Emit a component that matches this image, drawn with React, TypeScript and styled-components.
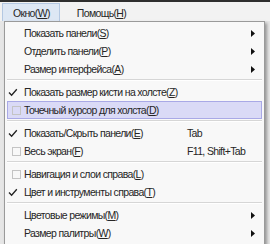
import React from "react";
import styled, { createGlobalStyle } from "styled-components";

const GlobalStyle = createGlobalStyle`
    html, body {
        margin: 0;
        padding: 0;
        width: 270px;
        height: 244px;
        overflow: hidden;
        background: #e6e6e6;
        font-family: "Liberation Sans", Arial, sans-serif;
        font-size: 10.5px;
        letter-spacing: -0.65px;
        color: #262626;
    }
`;

type Item =
    | { sep: true }
    | {
          sep?: false;
          label: string;
          key: string;
          check?: "on" | "off";
          shortcut?: string;
          sub?: boolean;
          active?: boolean;
      };

const items: Item[] = [
    { label: "Показать панели", key: "S", sub: true },
    { label: "Отделить панели", key: "P", sub: true },
    { label: "Размер интерфейса", key: "A", sub: true },
    { sep: true },
    { label: "Показать размер кисти на холсте", key: "Z", check: "on" },
    { label: "Точечный курсор для холста", key: "D", check: "off", active: true },
    { sep: true },
    { label: "Показать/Скрыть панели", key: "E", check: "on", shortcut: "Tab" },
    { label: "Весь экран", key: "F", check: "off", shortcut: "F11, Shift+Tab" },
    { sep: true },
    { label: "Навигация и слои справа", key: "L", check: "off" },
    { label: "Цвет и инструменты справа", key: "T", check: "on" },
    { sep: true },
    { label: "Цветовые режимы", key: "M", sub: true },
    { label: "Размер палитры", key: "W", sub: true },
];

const Mnemonic = ({ label, k }: { label: string; k: string }) => (
    <>
        {label}(<u>{k}</u>)
    </>
);

const App = () => {
    return (
        <>
            <GlobalStyle />
            <Screen>
                <TopStrip />
                <MenuBar>
                    <BarItem $open>
                        <Mnemonic label="Окно" k="W" />
                    </BarItem>
                    <BarItem>
                        <Mnemonic label="Помощь" k="H" />
                    </BarItem>
                </MenuBar>
                <Workspace>
                    <Dropdown>
                        {items.map((it, i) =>
                            it.sep ? (
                                <Separator key={i} />
                            ) : (
                                <Row key={i} $active={it.active}>
                                    <CheckCell>
                                        {it.check === "on" && (
                                            <svg width="10" height="9" viewBox="0 0 10 9">
                                                <path
                                                    d="M1 4.5 L3.6 7.2 L8.8 1.2"
                                                    fill="none"
                                                    stroke="#222"
                                                    strokeWidth="1.3"
                                                />
                                            </svg>
                                        )}
                                        {it.check === "off" && <Box />}
                                    </CheckCell>
                                    <Label>
                                        <Mnemonic label={it.label} k={it.key} />
                                    </Label>
                                    <Shortcut>{it.shortcut}</Shortcut>
                                    <ArrowCell>
                                        {it.sub && (
                                            <svg width="4" height="7" viewBox="0 0 4 7">
                                                <path d="M0 0 L4 3.5 L0 7 Z" fill="#111" />
                                            </svg>
                                        )}
                                    </ArrowCell>
                                </Row>
                            )
                        )}
                    </Dropdown>
                </Workspace>
            </Screen>
        </>
    );
};

const Screen = styled.div`
    width: 270px;
    height: 244px;
    display: flex;
    flex-direction: column;
`;

const TopStrip = styled.div`
    height: 2px;
    background: #2e2e2e;
`;

const MenuBar = styled.div`
    height: 19px;
    background: #f2f2f2;
    display: flex;
    align-items: stretch;
    padding: 1px 0 0 2px;
    box-sizing: border-box;
    gap: 6px;
`;

const BarItem = styled.div<{ $open?: boolean }>`
    display: flex;
    align-items: center;
    padding: 0 9px 0 10px;
    border: 1px solid ${(p) => (p.$open ? "#b4c8e2" : "transparent")};
    border-bottom: none;
    background: ${(p) => (p.$open ? "#dde7f4" : "transparent")};
    box-sizing: border-box;
`;

const Workspace = styled.div`
    position: relative;
    flex: 1;
    background: #e6e6e6;
`;

const Dropdown = styled.div`
    position: absolute;
    left: 4px;
    top: 0;
    width: 261px;
    background: #f8f8f8;
    border: 1px solid #9a9a9a;
    box-sizing: border-box;
    padding: 2px 2px;
    box-shadow: 2px 2px 3px rgba(0, 0, 0, 0.35);
`;

const Row = styled.div<{ $active?: boolean }>`
    height: 18px;
    display: grid;
    grid-template-columns: 15px 1fr 64px 10px;
    align-items: center;
    box-sizing: border-box;
    border: 1px solid ${(p) => (p.$active ? "#a9a9e6" : "transparent")};
    background: ${(p) => (p.$active ? "#dadaf6" : "transparent")};
`;

const CheckCell = styled.div`
    display: flex;
    align-items: center;
    justify-content: flex-start;
`;

const Box = styled.div`
    width: 9px;
    height: 9px;
    border: 1px solid #c4c4c4;
    box-sizing: border-box;
    margin-left: 4px;
`;

const Label = styled.div`
    padding-left: 1px;
    white-space: nowrap;
`;

const Shortcut = styled.div`
    white-space: nowrap;
`;

const ArrowCell = styled.div`
    display: flex;
    align-items: center;
`;

const Separator = styled.div`
    height: 1px;
    margin: 1px 0 2px;
    background: #d6d6d6;
    border-bottom: 1px solid #ffffff;
`;

export default App;
